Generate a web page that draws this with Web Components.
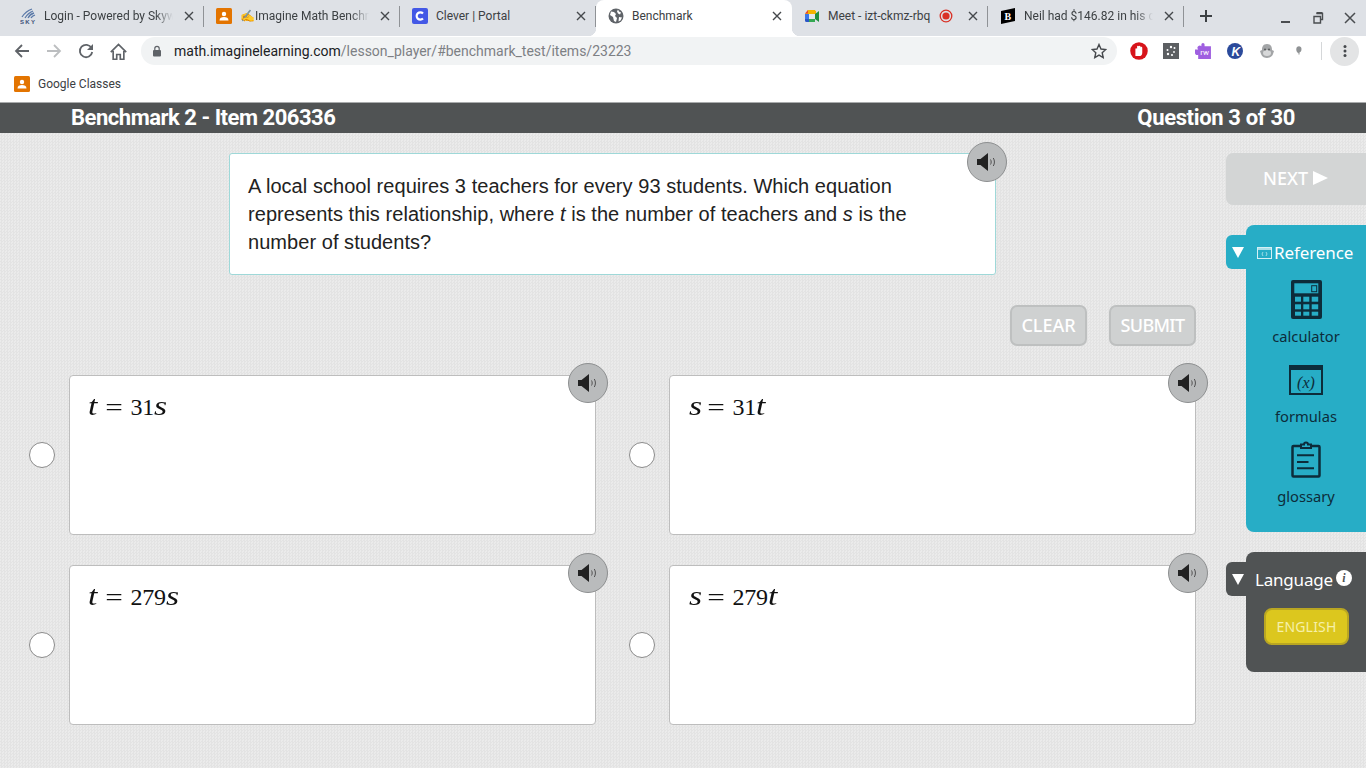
<!DOCTYPE html>
<html lang="en"><head><meta charset="utf-8"><title>Benchmark</title>
<style>
html,body{margin:0;height:768px;overflow:hidden;background:#e7e7e7;font-family:Roboto,"Liberation Sans",sans-serif}
</style></head><body>
<browser-frame>
  <browser-tab slot="tabs" fade><svg slot="icon" viewBox="0 0 16 16" width="16" height="16"><path d="M2 9Q6 3 12 1M5 10Q8 5 13 3M8 10Q10 6 14 5M11 10Q12 8 15 7" fill="none" stroke="#5a79a8" stroke-width="1.3"/><text x="0" y="16" font-size="6" font-family="Liberation Sans" font-weight="700" fill="#3b4f78" textLength="15">SKY</text></svg>Login - Powered by Skyward</browser-tab>
  <browser-tab slot="tabs" fade><svg slot="icon" viewBox="0 0 16 16" width="16" height="16"><rect width="16" height="16" rx="1.5" fill="#e37400"/><circle cx="8" cy="6" r="2.2" fill="#fff"/><path d="M3.5 12.5c0-2.5 2-3.4 4.500-3.400s4.500.9 4.500 3.400z" fill="#fff"/></svg><span>✍Imagine Math Benchmark</span></browser-tab>
  <browser-tab slot="tabs"><svg slot="icon" viewBox="0 0 16 16" width="16" height="16"><rect width="16" height="16" rx="2" fill="#4358e6"/><path d="M11 5.400A3.700 3.700 0 1 0 11 10.600" fill="none" stroke="#fff" stroke-width="2.200"/></svg>Clever | Portal</browser-tab>
  <browser-tab slot="tabs" active><svg slot="icon" viewBox="0 0 16 16" width="16" height="16"><circle cx="8" cy="8" r="7.500" fill="#5f6368"/><path d="M3 3.500l3 .5 2 2-1 2 2 2-1 4-2-1-1-4-3-2zM10 1.500l1 2 2 1-1 2-2-1-1-2zM11 9l3 .5-1.500 3-2 1z" fill="#fff"/></svg>Benchmark</browser-tab>
  <browser-tab slot="tabs"><svg slot="icon" viewBox="0 0 16 16" width="16" height="16"><path d="M4 2h7v4H5v0L1 6z" fill="#f4b400"/><path d="M4 2L1 5.500h3z" fill="#ea4335"/><path d="M1 6h4v5H1z" fill="#3b78e7"/><path d="M1 11h4v3H2.500A1.500 1.500 0 0 1 1 12.500z" fill="#2a56c6"/><path d="M5 11h6v3H5z" fill="#34a853"/><path d="M5 6h6v5H5z" fill="#fff" opacity=".15"/><path d="M11 2.500l1 .5v3h-1z" fill="#f4b400"/><path d="M11 6v5l4 3V3z" fill="#1e8e3e"/></svg>Meet - izt-ckmz-rbq<svg slot="status" viewBox="0 0 14 14" width="14" height="14"><circle cx="7" cy="7" r="5.800" fill="none" stroke="#d93025" stroke-width="1.300"/><circle cx="7" cy="7" r="3.600" fill="#d93025"/></svg></browser-tab>
  <browser-tab slot="tabs" fade><svg slot="icon" viewBox="0 0 16 16" width="16" height="16"><path d="M1 3l14-3v13L1 16z" fill="#000"/><text x="4.500" y="12" font-size="10" font-weight="700" font-family="Liberation Serif" fill="#fff">B</text></svg>Neil had $146.82 in his checking</browser-tab>
</browser-frame>
<lesson-header><span>Benchmark 2 - Item 206336</span><span slot="end" style="letter-spacing:-.35px">Question 3 of 30</span></lesson-header>
<lesson-stage>
  <question-card><span>A local school requires 3 teachers for every 93 students. Which equation</span><span>represents this relationship, where <i>t</i> is the number of teachers and <i>s</i> is the</span><span>number of students?</span></question-card>
  <action-row></action-row>
  <answer-grid>
    <answer-option><math-line v="t" a="31" b="s"></math-line></answer-option>
    <answer-option><math-line v="s" a="31" b="t"></math-line></answer-option>
    <answer-option><math-line v="t" a="279" b="s"></math-line></answer-option>
    <answer-option><math-line v="s" a="279" b="t"></math-line></answer-option>
  </answer-grid>
  <side-rail slot="rail"></side-rail>
</lesson-stage>

<script>
const def=(name,html,extra)=>{
  const t=document.createElement('template');t.innerHTML=html;
  customElements.define(name,class extends HTMLElement{
    constructor(){super();this.attachShadow({mode:'open'}).appendChild(t.content.cloneNode(true));}
    connectedCallback(){extra&&extra(this,this.shadowRoot);}
  });
};
const ic=(p,w=16)=>`<svg viewBox="0 0 16 16" width="${w}" height="${w}">${p}</svg>`;

def('browser-tab',`<style>
:host{display:flex;align-items:center;box-sizing:border-box;width:196px;height:36px;padding:0 7px 4px 12px;gap:8px;position:relative;font:12px/16px Roboto,sans-serif;color:#3c4043;white-space:nowrap}
.t{flex:1;min-width:0;overflow:hidden;display:flex;justify-content:space-between;align-items:center;padding-right:4px}
:host([fade]) .t{padding-right:0;-webkit-mask-image:linear-gradient(90deg,#000 86%,transparent 100%);mask-image:linear-gradient(90deg,#000 86%,transparent 100%)}
.i{display:flex;width:16px;height:16px}
.c{width:16px;height:16px;flex:none}
:host(:not([active]))::after{content:"";position:absolute;right:0;top:6px;height:21px;width:1px;background:#8f9296}
:host([active]){background:#fff;border-radius:8px 8px 0 0}
:host([active])::before,:host([active])::after{content:"";position:absolute;bottom:0;width:8px;height:8px}
:host([active])::before{left:-8px;background:radial-gradient(circle at 0 0,transparent 8px,#fff 8.500px)}
:host([active])::after{right:-8px;background:radial-gradient(circle at 100% 0,transparent 8px,#fff 8.500px)}
</style><span class="i"><slot name="icon"></slot></span><span class="t"><span><slot></slot></span><slot name="status"></slot></span>
<svg class="c" viewBox="0 0 16 16"><path d="M4 4l8 8M12 4l-8 8" stroke="#45484c" stroke-width="1.400" fill="none"/></svg>`);

def('browser-frame',`<style>
:host{display:block;height:102px;background:#fff;border-bottom:1px solid #a9abac}
.strip{display:flex;height:36px;background:#dee1e6;padding-left:8px;align-items:center}
.win{margin-left:auto;display:flex;height:36px;align-items:center}
.win span{width:32px;display:flex;justify-content:center}
.plus{width:44px;display:flex;justify-content:center;padding-bottom:4px;box-sizing:border-box}
.bar{display:flex;align-items:center;height:30px;padding-left:6px}
.b{width:32px;height:30px;display:flex;align-items:center;justify-content:center;flex:none}
.omni{margin-left:7px;width:976px;height:28px;border-radius:14px;background:#f1f3f4;display:flex;align-items:center;box-sizing:border-box;padding-left:10px;margin-right:6px;font:14px Roboto,sans-serif;color:#7d8084}
.omni b{font-weight:400;color:#202124}
.omni .star{margin-left:auto;margin-right:10px}
.lock{margin-right:11px;flex:none}
.sep{width:1px;height:18px;background:#d5d7d9;margin:0 8px 0 6px}
.menu{width:29px;height:29px;border-radius:50%;background:#e3e4e5;display:flex;align-items:center;justify-content:center}
.marks{height:36px;display:flex;align-items:center;padding-left:14px;gap:8px;font:12px Roboto,sans-serif;color:#3c4043}
</style>
<div class="strip"><slot name="tabs"></slot>
 <span class="plus">${ic('<path d="M8 2v12M2 8h12" stroke="#3c4043" stroke-width="2"/>')}</span>
 <span class="win">
  <span>${ic('<path d="M3 12h9" stroke="#4a4d50" stroke-width="2"/>')}</span>
  <span>${ic('<path d="M6.500 3.500h6v6h-2M4 6.500h6.500V13H4z" fill="none" stroke="#4a4d50" stroke-width="1.400"/><path d="M6.500 3h6" stroke="#4a4d50" stroke-width="2"/>')}</span>
  <span>${ic('<path d="M3 3l10 10M13 3L3 13" stroke="#4a4d50" stroke-width="1.500"/>')}</span>
 </span></div>
<div class="bar">
 <span class="b">${ic('<path d="M15 8H2.500M8 2L2 8l6 6" fill="none" stroke="#5f6368" stroke-width="1.800"/>')}</span>
 <span class="b">${ic('<path d="M1 8h12.500M8 2l6 6-6 6" fill="none" stroke="#bcbec0" stroke-width="1.800"/>')}</span>
 <span class="b">${ic('<path d="M13.500 5A6.200 6.200 0 1 0 14.200 9" fill="none" stroke="#5f6368" stroke-width="1.800"/><path d="M15 1v6H9z" fill="#5f6368"/>')}</span>
 <span class="b">${ic('<path d="M1.500 8.500L8 2l6.500 6.500M3.500 7.500V14.500h3v-4h3v4h3V7.500" fill="none" stroke="#5f6368" stroke-width="1.400"/>',19)}</span>
 <div class="omni"><svg class="lock" viewBox="0 0 12 12" width="12" height="12"><rect x="2" y="5" width="8" height="6.500" rx="1" fill="#5f6368"/><path d="M3.800 5V3.500a2.200 2.200 0 0 1 4.400 0V5" fill="none" stroke="#5f6368" stroke-width="1.200"/></svg><span><b>math.imaginelearning.com</b>/lesson_player/#benchmark_test/items/23223</span>
  <svg class="star" viewBox="0 0 16 16" width="16" height="16"><path d="M8 1.500l2 4.500 4.800.5-3.600 3.200 1 4.800L8 12.100l-4.200 2.400 1-4.800L1.200 6.500 6 6z" fill="none" stroke="#45484c" stroke-width="1.400"/></svg></div>
 <span class="b">${ic('<circle cx="8" cy="8" r="7.800" fill="#d7141a"/><path d="M4.800 12.500V6a.8.800 0 0 1 1.500 0V3.800a.8.800 0 0 1 1.500 0 .8.800 0 0 1 1.500 0V5a.8.800 0 0 1 1.600 0v4.500c0 2-1 3-2.800 3z" fill="#fff"/>',18)}</span>
 <span class="b">${ic('<rect width="16" height="16" fill="#5c5f62"/><g fill="#fff"><circle cx="8" cy="4" r="1.200"/><circle cx="11.500" cy="5" r="1"/><circle cx="4.500" cy="7" r="1"/><circle cx="11" cy="9" r=".9"/><circle cx="5" cy="11" r="1.200"/><circle cx="9" cy="12" r="1.100"/></g>')}</span>
 <span class="b"><svg viewBox="0 0 16 16" width="17" height="17"><path d="M0 6h3a2 2 0 0 1 3-3V1.500a1.500 1.500 0 0 1 3 0V3h6v12H3v-4a2 2 0 0 1-3-2z" fill="#9f5fe0"/><text x="5" y="11.500" font-size="7.500" font-family="Roboto" fill="#fff">rw</text></svg></span>
 <span class="b"><svg viewBox="0 0 16 16" width="16" height="16"><circle cx="8" cy="8" r="8" fill="#2b4a9b"/><text x="4.500" y="12.500" font-size="12" font-weight="700" font-style="italic" font-family="Liberation Sans" fill="#fff">K</text></svg></span>
 <span class="b">${ic('<path d="M8 1c4 0 5 3 5 6l2 1-1 3c-1 3-4 4-6 4s-5-1-6-4L1 8l2-1c0-3 1-6 5-6z" fill="#a3a5a7"/><ellipse cx="8" cy="10" rx="4" ry="3" fill="#d7d8d9"/><circle cx="6" cy="6.500" r="1" fill="#55585a"/><circle cx="10" cy="6.500" r="1" fill="#55585a"/>')}</span>
 <span class="b">${ic('<path d="M6 4c2-1.500 4.500-.5 4.500 2s-1 3-2 3.500v2H7.500V10C5.500 9.500 4.500 6 6 4z" fill="#8f9294"/>')}</span>
 <span class="sep"></span>
 <span class="menu">${ic('<g fill="#45484c"><circle cx="8" cy="3.500" r="1.500"/><circle cx="8" cy="8" r="1.500"/><circle cx="8" cy="12.500" r="1.500"/></g>')}</span>
</div>
<div class="marks"><svg viewBox="0 0 16 16" width="16" height="16"><rect width="16" height="16" rx="1.500" fill="#e37400"/><circle cx="8" cy="6" r="2.200" fill="#fff"/><path d="M3.500 12.500c0-2.500 2-3.400 4.500-3.400s4.500.9 4.500 3.400z" fill="#fff"/></svg><span>Google Classes</span></div>`);

def('lesson-header',`<style>
:host{display:flex;box-sizing:border-box;height:30px;background:#505354;color:#fff;align-items:center;justify-content:space-between;padding:0 71px;font:700 22px/30px Roboto,sans-serif;letter-spacing:-.48px}
</style><slot></slot><slot name="end"></slot>`);

def('lesson-stage',`<style>
:host{display:flex;height:635px;background-color:#e8e8e8;background-image:repeating-conic-gradient(#e3e3e3 0 25%,#ebebeb 0 50%);background-size:3px 3px}
.l{width:1226px;flex:none;box-sizing:border-box;padding-top:20px}
</style><div class="l"><slot></slot></div><slot name="rail"></slot>`);

def('speaker-button',`<style>
:host{display:flex;align-items:center;justify-content:center;position:absolute;width:40px;height:40px;box-sizing:border-box;border-radius:50%;background:#b9bbbc;border:1.500px solid #8d8f90}
</style><svg viewBox="0 0 20 18" width="20" height="18"><path d="M0 6h3.500L11 0v18L3.500 12H0z" fill="#222"/><path d="M13.500 6.500c.9 1.500.9 3.500 0 5M16.300 5c1.500 2.400 1.500 5.600 0 8" fill="none" stroke="#444" stroke-width=".9"/></svg>`);

def('question-card',`<style>
:host{display:block;box-sizing:border-box;width:767px;height:122px;margin-left:229px;background:#fff;border:1px solid #9ed8d8;border-radius:3px;padding:18px 19px 18px 18px;font:20px/28px "Liberation Sans",Arial,sans-serif;letter-spacing:.05px;color:#222;position:relative}
speaker-button{top:-12px;right:-12px}
::slotted(span){display:block;white-space:nowrap}
</style><slot></slot><speaker-button></speaker-button>`);

def('flat-button',`<style>
:host{display:flex;align-items:center;justify-content:center;box-sizing:border-box;height:41px;padding-bottom:2px;background:#cfd1d1;border:2px solid #bec0c0;border-radius:7px;color:#fff;font:500 18px "Noto Sans",sans-serif}
</style><slot></slot>`);

def('action-row',`<style>
:host{display:flex;justify-content:flex-end;gap:22px;margin:30px 30px 30px 0;height:40px}
</style><flat-button style="width:77px">CLEAR</flat-button><flat-button style="width:87px;letter-spacing:-.7px">SUBMIT</flat-button>`);

def('answer-grid',`<style>
:host{display:grid;grid-template-columns:566px 566px;column-gap:34px;row-gap:30px;margin-left:30px;width:1166px;grid-auto-rows:160px}
</style><slot></slot>`);

def('answer-option',`<style>
:host{display:flex;align-items:center;gap:14px}
.r{width:26px;height:26px;box-sizing:border-box;border-radius:50%;background:#fff;border:1.500px solid #8b8b8b;flex:none;margin-left:-1px}
.c{flex:1;height:160px;box-sizing:border-box;background:#fff;border:1px solid #bdbdbd;border-radius:4px;padding:16px 18px;position:relative}
speaker-button{top:-13px;right:-13px}
</style><span class="r"></span><div class="c"><slot></slot><speaker-button></speaker-button></div>`);

customElements.define('math-line',class extends HTMLElement{
  constructor(){super();this.attachShadow({mode:'open'});}
  connectedCallback(){
    const g=n=>this.getAttribute(n);
    const first=g('v');
    this.shadowRoot.innerHTML=`<style>
    :host{display:flex;align-items:baseline;height:28px;font:24px/28px "Liberation Serif","DejaVu Serif",serif;color:#111}
    i{display:inline-block;font-style:italic;font-size:28px;transform:scaleX(1.200);transform-origin:0 50%}
    .l{width:17px}
    .l.s{width:18px;margin-left:1px}
    .e{display:inline-block;transform:scaleX(1.300);margin:0 2px;width:14px;text-align:center}
    .n{margin-left:7.500px;letter-spacing:-.3px}
    </style><i class="l ${first}">${first}</i><span class="e">=</span><span class="n">${g('a')}</span><i>${g('b')}</i>`;
  }
});

def('side-panel',`<style>
:host{display:block;box-sizing:border-box;width:120px;margin-left:20px;position:relative;border-radius:8px 0 0 8px;background:var(--panel);color:#fff}
.tab{position:absolute;left:-20px;top:10px;width:24px;height:34px;border-radius:6px 0 0 6px;background:var(--panel);display:flex;align-items:center;padding-left:6px;box-sizing:border-box}
.head{display:flex;align-items:center;box-sizing:border-box;height:51px;padding-top:4px;font:17px "Noto Sans",sans-serif;padding-left:11px}
</style><div class="tab"><svg viewBox="0 0 12 12" width="12" height="12"><path d="M0 1h12L6 12z" fill="#fff"/></svg></div><div class="head"><slot name="head"></slot></div><slot></slot>`);

def('tool-item',`<style>
:host{display:flex;flex-direction:column;align-items:center;height:80px;font:14.700px/20px "Noto Sans",sans-serif;color:#0d2c3a}
.i{height:47px;margin-bottom:3px;display:flex;align-items:center;justify-content:center}
</style><span class="i"><slot name="icon"></slot></span><slot></slot>`);

def('side-rail',`<style>
:host{display:block;width:140px;padding-top:20px}
.next{height:52px;box-sizing:border-box;padding:0 1px 2px 0;background:#d3d5d5;border-radius:7px 0 0 7px;color:#fff;display:flex;align-items:center;justify-content:center;gap:5px;font:500 18px "Noto Sans",sans-serif;margin-bottom:20px}
.ref{--panel:#27adc6;height:307px;margin-bottom:20px}
.lang{--panel:#505354;height:120px}
.mono{display:flex;align-items:center;gap:2px;letter-spacing:-.1px}
.lh{display:flex;align-items:center;margin:-1px 0 0 -2px;letter-spacing:-.2px}
.en{display:flex;align-items:center;justify-content:center;box-sizing:border-box;width:85px;height:37px;margin:5px 0 0 18px;background:#dcc71e;border:2px solid #b9a622;border-radius:8px;color:#f6f0a8;font:14px "Noto Sans",sans-serif;letter-spacing:.2px}
.info{display:inline-flex;width:16px;height:16px;border-radius:50%;background:#fff;color:#505354;font:italic 700 12px/16px "Liberation Serif",serif;align-items:center;justify-content:center;margin:-2px 0 0 3px}
</style>
<div class="next">NEXT <svg viewBox="0 0 15 14" width="15" height="14"><path d="M0 0l15 7-15 7z" fill="#fff"/></svg></div>
<side-panel class="ref">
 <span slot="head" class="mono"><svg viewBox="0 0 15 12" width="15" height="12"><rect x=".5" y=".5" width="14" height="11" fill="none" stroke="#d4f0f5"/><path d="M.5 2h14" stroke="#d4f0f5" stroke-width="1.500"/><path d="M6 5l-1 2 1 2M9 5l1 2-1 2" fill="none" stroke="#d4f0f5" stroke-width=".7"/></svg>Reference</span>
 <tool-item><svg slot="icon" viewBox="0 0 31 39" width="31" height="39"><rect width="31" height="39" rx="2" fill="#0d2c3a"/><rect x="3.300" y="3.300" width="24" height="10" fill="#27adc6"/><rect x="20.700" y="5.700" width="5" height="6" fill="#27adc6" stroke="#0d2c3a" stroke-width="1"/><g fill="#27adc6"><rect x="4" y="16.700" width="6" height="5"/><rect x="12.300" y="16.700" width="6" height="5"/><rect x="20.700" y="16.700" width="6.500" height="5"/><rect x="4" y="24.300" width="6" height="5"/><rect x="12.300" y="24.300" width="6" height="5"/><rect x="20.700" y="24.300" width="6.500" height="5"/><rect x="4" y="31.700" width="6" height="4"/><rect x="12.300" y="31.700" width="6" height="4"/><rect x="20.700" y="31.700" width="6.500" height="4"/></g></svg>calculator</tool-item>
 <tool-item><svg slot="icon" viewBox="0 0 34 30" width="34" height="30"><rect x="1" y="1" width="32" height="28" fill="#27adc6" stroke="#0d2c3a" stroke-width="2"/><rect width="34" height="5" fill="#0d2c3a"/><text x="17" y="22.500" text-anchor="middle" font-size="16" font-style="italic" font-family="Liberation Serif" fill="#0d2c3a">(x)</text></svg>formulas</tool-item>
 <tool-item><svg slot="icon" viewBox="0 0 30 37" width="30" height="37"><path d="M10 5H2.500a1 1 0 0 0-1 1v28.500a1 1 0 0 0 1 1h25a1 1 0 0 0 1-1V6a1 1 0 0 0-1-1H20" fill="none" stroke="#0d2c3a" stroke-width="2.500"/><path d="M10 7V3.500h3a2 2 0 0 1 4 0h3V7z" fill="none" stroke="#0d2c3a" stroke-width="2"/><path d="M6 14.300h17M6 21h11.500M6 27.300h17" stroke="#0d2c3a" stroke-width="2"/></svg>glossary</tool-item>
</side-panel>
<side-panel class="lang">
 <span slot="head" class="lh"><span>Language</span><span class="info">i</span></span>
 <div class="en">ENGLISH</div>
</side-panel>`);
</script>
</body></html>
